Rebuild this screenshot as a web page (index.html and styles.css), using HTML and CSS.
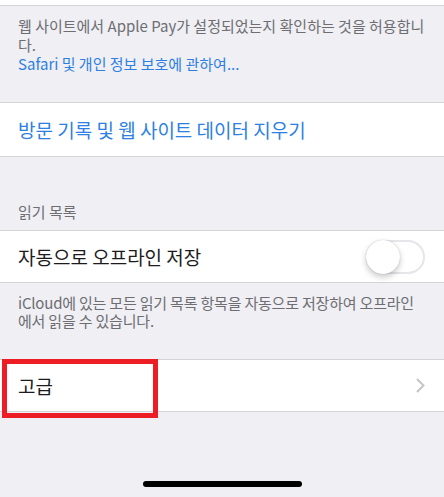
FILE: index.html
```html
<!DOCTYPE HTML>
<html>

<head>
	<meta charset="utf-8">

	<link rel="stylesheet" href="styles.css">
</head>

<body>

	<div class="top-cell"></div>

	<p class="footer first">
		웹 사이트에서 Apple Pay가 설정되었는지 확인하는 것을 허용합니다.<br>
		<a class="more" href="#">Safari 및 개인 정보 보호에 관하여...</a>
	</p>

	<div class="group">
		<div class="cell clear">방문 기록 및 웹 사이트 데이터 지우기</div>
	</div>

	<p class="header">읽기 목록</p>

	<div class="group">
		<div class="cell">
			<span>자동으로 오프라인 저장</span>
			<span class="switch"><span class="knob"></span></span>
		</div>
	</div>

	<p class="footer second">iCloud에 있는 모든 읽기 목록 항목을 자동으로 저장하여 오프라인에서 읽을 수 있습니다.</p>

	<div class="group">
		<div class="cell advanced">
			<span>고급</span>
			<svg class="chevron" width="9" height="15" viewBox="0 0 9 15">
				<path d="M1 1 L7.5 7.5 L1 14" fill="none" stroke="#c4c4c9" stroke-width="2"/>
			</svg>
			<span class="mark"></span>
		</div>
	</div>

	<div class="home-bar"></div>

</body>

</html>
```

FILE: styles.css
```css
html, body {
	margin: 0;
	height: 100%;
}

body {
	background-color: #efeff4;
	font-family: "Noto Sans CJK KR", "Noto Sans", sans-serif;
	overflow: hidden;
}

.top-cell {
	height: 5px;
	background-color: #fff;
	border-bottom: 1px solid #d4d4d8;
}

.footer {
	margin: 0;
	padding: 0 18px;
	font-size: 15px;
	color: #6d6d72;
}

.footer.first {
	height: 86px;
	padding-top: 10px;
	padding-right: 17px;
	line-height: 19px;
}

.footer.second {
	height: 65px;
	padding-top: 11px;
	padding-right: 30px;
	line-height: 18px;
	letter-spacing: -0.2px;
}

.more {
	color: #2d7fe3;
	text-decoration: none;
}

.group {
	background-color: #fff;
	border-top: 1px solid #d4d4d8;
	border-bottom: 1px solid #d4d4d8;
}

.cell {
	position: relative;
	display: flex;
	align-items: center;
	justify-content: space-between;
	height: 51px;
	padding: 0 19px 0 18px;
	font-size: 19px;
	color: #1c1c1e;
}

.cell.clear {
	height: 53px;
	color: #2d7fe3;
}

.header {
	margin: 0;
	padding: 45px 18px 0 18px;
	height: 28px;
	font-size: 15px;
	line-height: 19px;
	color: #6d6d72;
}

.switch {
	box-sizing: border-box;
	width: 59px;
	height: 34px;
	border: 2px solid #e6e6ea;
	border-radius: 17px;
	background-color: #fff;
}

.knob {
	display: block;
	width: 34px;
	height: 34px;
	margin: -2px 0 0 -2px;
	border-radius: 50%;
	background-color: #fff;
	box-shadow: 0 3px 6px rgba(0, 0, 0, 0.22), 0 0 1px rgba(0, 0, 0, 0.25);
}

.chevron {
	display: block;
}

.mark {
	position: absolute;
	left: 2px;
	top: -1px;
	width: 146px;
	height: 49px;
	border: 5px solid #ec1d25;
}

.home-bar {
	width: 159px;
	height: 6px;
	margin: 69px auto 0 auto;
	border-radius: 3px;
	background-color: #000;
}
```
